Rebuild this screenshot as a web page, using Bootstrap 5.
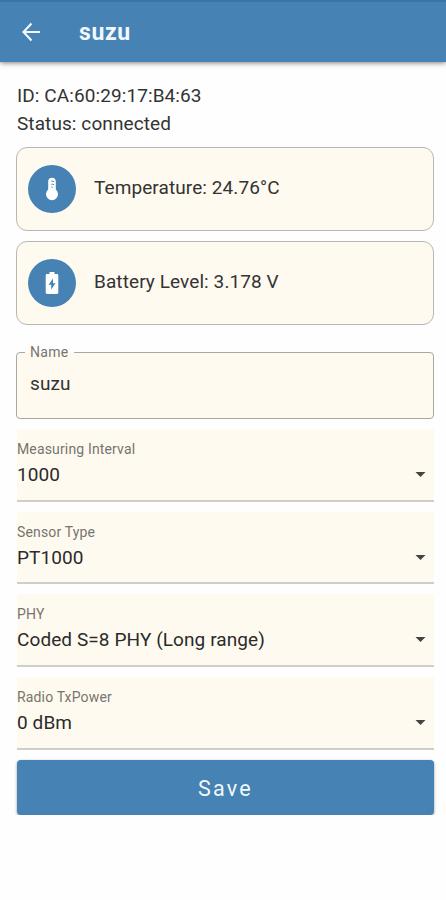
<!DOCTYPE html>
<html lang="en">
<head>
<meta charset="utf-8">
<meta name="viewport" content="width=device-width, initial-scale=1">
<title>suzu</title>
<link href="https://cdn.jsdelivr.net/npm/bootstrap@5.3.0/dist/css/bootstrap.min.css" rel="stylesheet">
<style>
  :root { --steel: #4682b4; --cream: #fffaf0; }
  body { font-family: Roboto, "Liberation Sans", sans-serif; font-size: 19px; line-height: 28px; color: #333; letter-spacing: .09px; background: #fefefe; }
  .app-bar { height: 62px; background: var(--steel); border-top: 2px solid #3d74a5; box-shadow: 0 1px 5px rgba(0,0,0,.5); padding: 0 20px 0 21px; gap: 38px; }
  .app-title { font-size: 23px; font-weight: 700; letter-spacing: .6px; line-height: 28px; padding-top: 1px; color: #f1f8fd; }
  .page-body { padding: 20px 12px 0 16px; }
  .device-info { padding-left: 1px; }
  .readings { gap: 10px; margin-top: 9px; }
  .reading { height: 84px; background: var(--cream); border: 1px solid #b9b7b3; border-radius: 11px; padding-left: 11px; gap: 18px; }
  .reading-text { padding-bottom: 2px; }
  .reading-icon { width: 48px; height: 48px; background: var(--steel); }
  .name-field { height: 75px; margin: 19px 0 0; border: 1px solid #a9a7a2; border-radius: 4px; background: linear-gradient(var(--cream), var(--cream)); padding: 0 13px; }
  .name-field legend { float: none; width: auto; margin: 0 0 0 -5px; padding: 0 5px; font-size: 14px; line-height: 16px; letter-spacing: .3px; color: #77746f; }
  .name-input { font-size: 19px; line-height: 24px; letter-spacing: .09px; color: #333; margin-top: 12px; background: transparent; border: 0; outline: 0; padding: 0; display: block; }
  .picks { gap: 10px; margin: 10px 0 0 1px; }
  .pick { height: 72.7px; background: var(--cream); border-bottom: 2px solid #d0cec9; padding: 10px 8px 0 0; }
  .pick-label { font-size: 14px; line-height: 20px; letter-spacing: .15px; color: #77746f; }
  .pick-value { line-height: 30px; padding-top: 1px; color: #2a2a2a; }
  .save-btn { height: 55px; margin: 10px 0 0 1px; background: var(--steel); color: #f1f8fd; border: 0; border-radius: 4px; font-size: 21.5px; letter-spacing: 2.2px; box-shadow: 0 1px 3px rgba(0,0,0,.4); }
</style>
<script src="https://cdn.jsdelivr.net/npm/bootstrap@5.3.0/dist/js/bootstrap.bundle.min.js"></script>
</head>
<body>
<header class="app-bar d-flex align-items-center">
  <svg width="20" height="20" viewBox="0 0 20 20" fill="none" stroke="#f1f8fd" stroke-width="2.1" aria-label="Back"><path d="M19 10H3M10.500 1.500L2.500 10l8 8.500"/></svg>
  <h1 class="app-title m-0">suzu</h1>
</header>
<main class="page-body">
  <div class="device-info">
    <div>ID: CA:60:29:17:B4:63</div>
    <div>Status: connected</div>
  </div>
  <section class="readings d-flex flex-column">
    <div class="reading d-flex align-items-center">
      <span class="reading-icon rounded-circle d-flex align-items-center justify-content-center">
        <svg width="24" height="24" viewBox="0 0 24 24"><path fill="#fff" d="M15.800 12.500V4.500a3.800 3.800 0 0 0-7.600 0v8a6 6 0 1 0 7.600 0z"/><path d="M12 3.500v1.500M12 6.500v1.500M12 9.500v1.500M12.500 4.500h1.500M12.500 7.500h1.500" stroke="#4682b4" stroke-width=".9" fill="none"/></svg>
      </span>
      <span class="reading-text">Temperature: 24.76°C</span>
    </div>
    <div class="reading d-flex align-items-center">
      <span class="reading-icon rounded-circle d-flex align-items-center justify-content-center">
        <svg width="24" height="24" viewBox="0 0 24 24"><path fill="#fff" d="M9.500 1h5v2H17q1.300 0 1.300 1.400v17.200Q18.300 23 17 23H7q-1.300 0-1.300-1.400V4.400Q5.700 3 7 3h2.500z"/><path fill="#4682b4" d="M13 7.500v4.700h2.500L11.200 18.500v-4.700H8.600z"/></svg>
      </span>
      <span class="reading-text">Battery Level: 3.178 V</span>
    </div>
  </section>
  <fieldset class="name-field">
    <legend>Name</legend>
    <input class="name-input w-100" value="suzu" aria-label="Name">
  </fieldset>
  <section class="picks d-flex flex-column">
    <div class="pick">
      <div class="pick-label">Measuring Interval</div>
      <div class="pick-value d-flex justify-content-between align-items-center">1000<svg width="11" height="6" viewBox="0 0 11 6"><path fill="#444" d="M.5 0h10L5.500 5z"/></svg></div>
    </div>
    <div class="pick">
      <div class="pick-label">Sensor Type</div>
      <div class="pick-value d-flex justify-content-between align-items-center">PT1000<svg width="11" height="6" viewBox="0 0 11 6"><path fill="#444" d="M.5 0h10L5.500 5z"/></svg></div>
    </div>
    <div class="pick">
      <div class="pick-label">PHY</div>
      <div class="pick-value d-flex justify-content-between align-items-center">Coded S=8 PHY (Long range)<svg width="11" height="6" viewBox="0 0 11 6"><path fill="#444" d="M.5 0h10L5.500 5z"/></svg></div>
    </div>
    <div class="pick">
      <div class="pick-label">Radio TxPower</div>
      <div class="pick-value d-flex justify-content-between align-items-center">0 dBm<svg width="11" height="6" viewBox="0 0 11 6"><path fill="#444" d="M.5 0h10L5.500 5z"/></svg></div>
    </div>
  </section>
  <div class="d-flex"><button type="button" class="save-btn btn flex-grow-1 px-0 pt-1 pb-0">Save</button></div>
</main>
</body>
</html>
